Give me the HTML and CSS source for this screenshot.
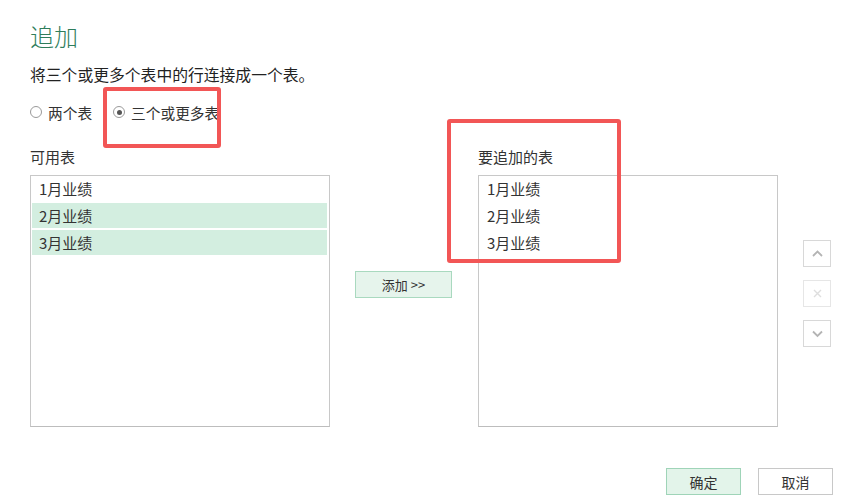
FILE: index.html
```html
<!DOCTYPE html>
<html lang="zh-CN">
<head>
<meta charset="utf-8">
<title>追加</title>
<link rel="stylesheet" href="styles.css">
</head>
<body>
<div class="dialog">
  <h1 class="title">追加</h1>
  <p class="subtitle">将三个或更多个表中的行连接成一个表。</p>
  <div class="radios">
    <label class="radio"><span class="circle"></span>两个表</label>
    <label class="radio"><span class="circle checked"></span>三个或更多表</label>
  </div>
  <div class="columns">
    <div class="col">
      <div class="label">可用表</div>
      <div class="listbox">
        <div class="item">1月业绩</div>
        <div class="item selected">2月业绩</div>
        <div class="item selected">3月业绩</div>
      </div>
    </div>
    <div class="middle">
      <button class="btn add">添加 &gt;&gt;</button>
    </div>
    <div class="col">
      <div class="label">要追加的表</div>
      <div class="listbox">
        <div class="item">1月业绩</div>
        <div class="item">2月业绩</div>
        <div class="item">3月业绩</div>
      </div>
    </div>
    <div class="side">
      <button class="sbtn"><svg width="13" height="13" viewBox="0 0 13 13"><path d="M2 9 L6.5 4.5 L11 9" fill="none" stroke="#b4b4b4" stroke-width="1.8"/></svg></button>
      <button class="sbtn dim"><svg width="13" height="13" viewBox="0 0 13 13"><path d="M3 3 L10 10 M10 3 L3 10" fill="none" stroke="#dedede" stroke-width="1.4"/></svg></button>
      <button class="sbtn"><svg width="13" height="13" viewBox="0 0 13 13"><path d="M2 4.5 L6.5 9 L11 4.5" fill="none" stroke="#b4b4b4" stroke-width="1.8"/></svg></button>
    </div>
  </div>
  <div class="footer">
    <button class="btn ok">确定</button>
    <button class="btn cancel">取消</button>
  </div>
  <div class="mark mark-radio"></div>
  <div class="mark mark-list"></div>
</div>
</body>
</html>
```
FILE: styles.css
```css
* { box-sizing: border-box; }
html, body { margin: 0; padding: 0; background: #fff; }
body {
  font-family: "Noto Sans CJK SC", "Noto Sans", "Liberation Sans", sans-serif;
  color: #333;
  width: 843px;
  height: 504px;
  overflow: hidden;
}
.dialog {
  position: relative;
  padding: 20px 10px 0 30px;
}
.title {
  margin: 0;
  font-size: 24px;
  line-height: 32px;
  font-weight: 300;
  color: #2e7d5b;
}
.subtitle {
  margin: 12px 0 0;
  font-size: 15.8px;
  line-height: 22px;
  color: #222;
}
.radios {
  margin-top: 16px;
  display: flex;
  gap: 21px;
  font-size: 14.7px;
  line-height: 22px;
}
.radio {
  display: flex;
  align-items: center;
  gap: 6px;
}
.circle {
  width: 12px;
  height: 12px;
  border: 1px solid #9a9a9a;
  border-radius: 50%;
  position: relative;
  top: -1px;
}
.circle.checked::after {
  content: "";
  position: absolute;
  left: 2.5px;
  top: 2.5px;
  width: 5px;
  height: 5px;
  border-radius: 50%;
  background: #555;
}
.columns {
  margin-top: 22px;
  display: flex;
  align-items: flex-start;
}
.col { width: 300px; }
.label {
  font-size: 15px;
  line-height: 22px;
  margin-bottom: 7px;
}
.listbox {
  height: 252px;
  border: 1px solid #c8c8c8;
  border-bottom-color: #bdbdbd;
  padding: 0 2px 0 1px;
}
.item {
  height: 25px;
  line-height: 25px;
  margin-bottom: 2px;
  padding-left: 7px;
  font-size: 15px;
}
.item.selected { background: #d3eee0; }
.middle {
  margin: 0 26px 0 25px;
  padding-top: 125px;
}
.btn {
  font-family: inherit;
  color: #333;
  height: 27px;
  padding: 0;
  cursor: pointer;
}
.add {
  width: 97px;
  font-size: 13px;
  background: #e6f4ec;
  border: 1px solid #a9d9bf;
}
.side {
  margin-left: 25px;
  padding-top: 94px;
  display: flex;
  flex-direction: column;
  gap: 13px;
}
.sbtn {
  width: 28px;
  height: 27px;
  padding: 0;
  background: #fff;
  border: 1px solid #d8d8d8;
  display: flex;
  align-items: center;
  justify-content: center;
}
.sbtn.dim { border-color: #e6e6e6; }
.footer {
  margin-top: 41px;
  display: flex;
  justify-content: flex-end;
  gap: 17px;
}
.ok {
  width: 75px;
  font-size: 14px;
  background: #e3f4ea;
  border: 1px solid #9fd4b8;
}
.cancel {
  width: 75px;
  font-size: 14px;
  background: #fff;
  border: 1px solid #c8c8c8;
}
.mark {
  position: absolute;
  border: 4px solid #f25656;
  border-radius: 3px;
  pointer-events: none;
}
.mark-radio { left: 103px; top: 87px; width: 118px; height: 61px; }
.mark-list { left: 447px; top: 119px; width: 174px; height: 144px; }
```
